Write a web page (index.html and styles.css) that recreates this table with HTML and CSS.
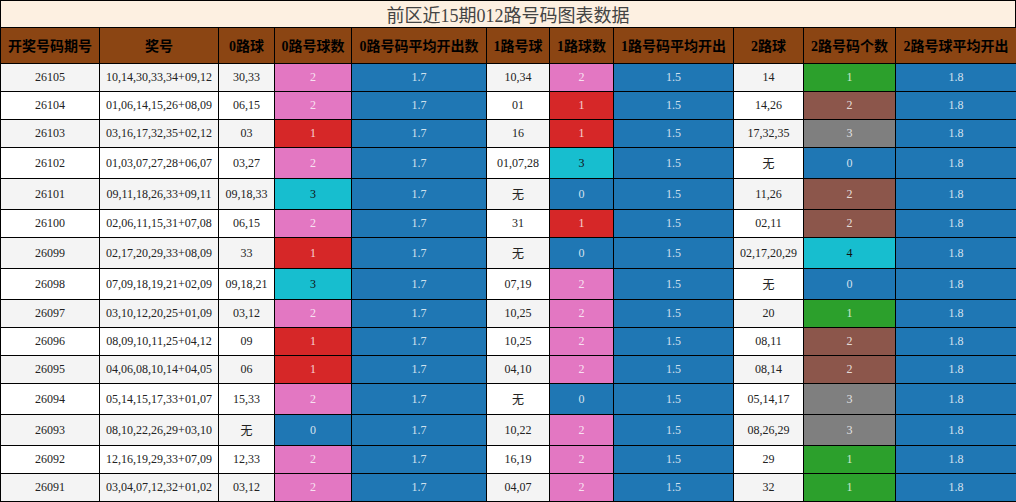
FILE: index.html
```html
<!DOCTYPE html>
<html lang="zh">
<head>
<meta charset="utf-8">
<title>前区近15期012路号码图表数据</title>
<link rel="stylesheet" href="styles.css">
</head>
<body>
<div class="chart">
  <div class="title">前区近15期012路号码图表数据</div>
  <table class="data">
    <colgroup>
      <col class="c1"><col class="c2"><col class="c3"><col class="c4"><col class="c5"><col class="c6"><col class="c7"><col class="c8"><col class="c9"><col class="c10"><col class="c11">
    </colgroup>
    <thead>
      <tr>
        <th>开奖号码期号</th><th>奖号</th><th>0路球</th><th>0路号球数</th><th>0路号码平均开出数</th><th>1路号球</th><th>1路球数</th><th>1路号码平均开出</th><th>2路球</th><th>2路号码个数</th><th>2路号球平均开出</th>
      </tr>
    </thead>
    <tbody>
      <tr><td>26105</td><td>10,14,30,33,34+09,12</td><td>30,33</td><td class="pink">2</td><td class="blue">1.7</td><td>10,34</td><td class="pink">2</td><td class="blue">1.5</td><td>14</td><td class="green">1</td><td class="blue">1.8</td></tr>
      <tr><td>26104</td><td>01,06,14,15,26+08,09</td><td>06,15</td><td class="pink">2</td><td class="blue">1.7</td><td>01</td><td class="red">1</td><td class="blue">1.5</td><td>14,26</td><td class="brown">2</td><td class="blue">1.8</td></tr>
      <tr><td>26103</td><td>03,16,17,32,35+02,12</td><td>03</td><td class="red">1</td><td class="blue">1.7</td><td>16</td><td class="red">1</td><td class="blue">1.5</td><td>17,32,35</td><td class="gray">3</td><td class="blue">1.8</td></tr>
      <tr><td>26102</td><td>01,03,07,27,28+06,07</td><td>03,27</td><td class="pink">2</td><td class="blue">1.7</td><td>01,07,28</td><td class="cyan">3</td><td class="blue">1.5</td><td>无</td><td class="blue">0</td><td class="blue">1.8</td></tr>
      <tr><td>26101</td><td>09,11,18,26,33+09,11</td><td>09,18,33</td><td class="cyan">3</td><td class="blue">1.7</td><td>无</td><td class="blue">0</td><td class="blue">1.5</td><td>11,26</td><td class="brown">2</td><td class="blue">1.8</td></tr>
      <tr><td>26100</td><td>02,06,11,15,31+07,08</td><td>06,15</td><td class="pink">2</td><td class="blue">1.7</td><td>31</td><td class="red">1</td><td class="blue">1.5</td><td>02,11</td><td class="brown">2</td><td class="blue">1.8</td></tr>
      <tr><td>26099</td><td>02,17,20,29,33+08,09</td><td>33</td><td class="red">1</td><td class="blue">1.7</td><td>无</td><td class="blue">0</td><td class="blue">1.5</td><td>02,17,20,29</td><td class="cyan">4</td><td class="blue">1.8</td></tr>
      <tr><td>26098</td><td>07,09,18,19,21+02,09</td><td>09,18,21</td><td class="cyan">3</td><td class="blue">1.7</td><td>07,19</td><td class="pink">2</td><td class="blue">1.5</td><td>无</td><td class="blue">0</td><td class="blue">1.8</td></tr>
      <tr><td>26097</td><td>03,10,12,20,25+01,09</td><td>03,12</td><td class="pink">2</td><td class="blue">1.7</td><td>10,25</td><td class="pink">2</td><td class="blue">1.5</td><td>20</td><td class="green">1</td><td class="blue">1.8</td></tr>
      <tr><td>26096</td><td>08,09,10,11,25+04,12</td><td>09</td><td class="red">1</td><td class="blue">1.7</td><td>10,25</td><td class="pink">2</td><td class="blue">1.5</td><td>08,11</td><td class="brown">2</td><td class="blue">1.8</td></tr>
      <tr><td>26095</td><td>04,06,08,10,14+04,05</td><td>06</td><td class="red">1</td><td class="blue">1.7</td><td>04,10</td><td class="pink">2</td><td class="blue">1.5</td><td>08,14</td><td class="brown">2</td><td class="blue">1.8</td></tr>
      <tr><td>26094</td><td>05,14,15,17,33+01,07</td><td>15,33</td><td class="pink">2</td><td class="blue">1.7</td><td>无</td><td class="blue">0</td><td class="blue">1.5</td><td>05,14,17</td><td class="gray">3</td><td class="blue">1.8</td></tr>
      <tr><td>26093</td><td>08,10,22,26,29+03,10</td><td>无</td><td class="blue">0</td><td class="blue">1.7</td><td>10,22</td><td class="pink">2</td><td class="blue">1.5</td><td>08,26,29</td><td class="gray">3</td><td class="blue">1.8</td></tr>
      <tr><td>26092</td><td>12,16,19,29,33+07,09</td><td>12,33</td><td class="pink">2</td><td class="blue">1.7</td><td>16,19</td><td class="pink">2</td><td class="blue">1.5</td><td>29</td><td class="green">1</td><td class="blue">1.8</td></tr>
      <tr><td>26091</td><td>03,04,07,12,32+01,02</td><td>03,12</td><td class="pink">2</td><td class="blue">1.7</td><td>04,07</td><td class="pink">2</td><td class="blue">1.5</td><td>32</td><td class="green">1</td><td class="blue">1.8</td></tr>
    </tbody>
  </table>
</div>
</body>
</html>
```

FILE: styles.css
```css
html, body {
  margin: 0;
  padding: 0;
  background: #ffffff;
}

.chart {
  width: 1016px;
  font-family: "Liberation Serif", "Noto Sans CJK SC", serif;
}

.title {
  box-sizing: border-box;
  width: 1016px;
  border: 1px solid #000;
  border-bottom: none;
  background: #fdf0e1;
  color: #444;
  font-size: 18px;
  text-align: center;
}

.data {
  width: 1016px;
  border-collapse: collapse;
  table-layout: fixed;
  border: 1px solid #000;
  font-size: 12px;
}

.c1 { width: 99px; }
.c2 { width: 119px; }
.c3 { width: 56px; }
.c4 { width: 77px; }
.c5 { width: 135px; }
.c6 { width: 63px; }
.c7 { width: 64px; }
.c8 { width: 120px; }
.c9 { width: 70px; }
.c10 { width: 92px; }
.c11 { width: 121px; }

.data th {
  background: #8b4513;
  color: #000;
  font-size: 14px;
  font-weight: bold;
  border: 1px solid #000;
  padding: 7px 0 8px;
  text-align: center;
  white-space: nowrap;
}

.data td {
  border: 1px solid #000;
  padding: 6px 0 6px;
  text-align: center;
  color: #222;
  white-space: nowrap;
}

.data tbody tr:nth-child(odd) td {
  background: #f4f4f4;
}

.data tbody tr:nth-child(even) td {
  background: #ffffff;
}

.data tbody tr td.blue { background: #1f77b4; color: rgba(255, 255, 255, 0.8); }
.data tbody tr td.pink { background: #e377c2; color: rgba(255, 255, 255, 0.8); }
.data tbody tr td.red { background: #d62728; color: rgba(255, 255, 255, 0.8); }
.data tbody tr td.green { background: #2ca02c; color: rgba(255, 255, 255, 0.8); }
.data tbody tr td.brown { background: #8c564b; color: rgba(255, 255, 255, 0.8); }
.data tbody tr td.gray { background: #7f7f7f; color: rgba(255, 255, 255, 0.8); }
.data tbody tr td.cyan { background: #17becf; color: #111; }
```
